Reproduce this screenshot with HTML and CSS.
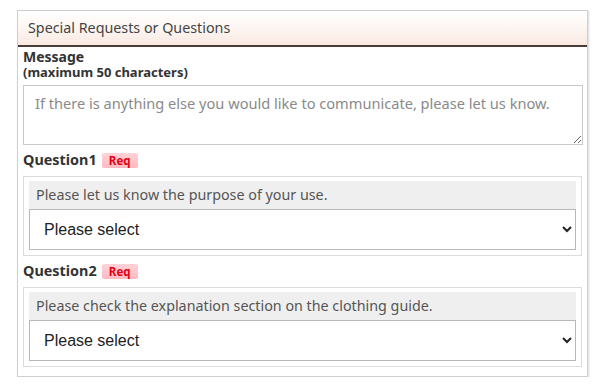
FILE: index.html
```html
<!DOCTYPE html>
<html lang="en">
<head>
    <meta charset="UTF-8">
    <title>Special Requests or Questions</title>
    <link rel="stylesheet" href="styles.css">
</head>
<body>
    <div class="panel">
        <div class="panel-head">Special Requests or Questions</div>
        <div class="panel-body">
            <div class="field-title">Message</div>
            <div class="field-note">(maximum 50 characters)</div>
            <textarea class="message" placeholder="If there is anything else you would like to communicate, please let us know."></textarea>

            <div class="q-title">Question1 <span class="req">Req</span></div>
            <div class="q-box">
                <div class="q-text">Please let us know the purpose of your use.</div>
                <select class="q-select">
                    <option>Please select</option>
                </select>
            </div>

            <div class="q-title">Question2 <span class="req">Req</span></div>
            <div class="q-box">
                <div class="q-text">Please check the explanation section on the clothing guide.</div>
                <select class="q-select">
                    <option>Please select</option>
                </select>
            </div>
        </div>
    </div>
</body>
</html>
```

FILE: styles.css
```css
* {
    margin: 0;
    padding: 0;
    box-sizing: border-box;
}

body {
    font-family: "Noto Sans", "Open Sans", sans-serif;
    color: #333;
    background: #fff;
    padding: 10px 0 0 17px;
}

.panel {
    width: 571px;
    border: 1px solid #cfcfcf;
    box-shadow: 1px 1px 2px rgba(0, 0, 0, 0.15);
}

.panel-head {
    height: 36px;
    line-height: 34px;
    padding-left: 10px;
    font-size: 14.3px;
    color: #444;
    background: linear-gradient(to bottom, #fff 0%, #fdf6f2 50%, #f9e9e2 100%);
    border-bottom: 2px solid #4a3b35;
}

.panel-body {
    padding: 1px 4px 9px 5px;
}

.field-title {
    font-size: 14px;
    font-weight: bold;
    line-height: 17px;
}

.field-note {
    font-size: 13px;
    font-weight: bold;
    line-height: 15px;
}

.message {
    display: block;
    width: 560px;
    height: 60px;
    margin-top: 5px;
    padding: 7px 11px;
    border: 1px solid #c8c8c8;
    font-family: inherit;
    font-size: 14.6px;
    line-height: 20px;
    resize: vertical;
}

.message::placeholder {
    color: #8a8a8a;
}

.q-title {
    font-size: 14.4px;
    font-weight: bold;
    line-height: 16px;
    margin: 7px 0 8px;
    display: flex;
    align-items: center;
    gap: 5px;
}

.req {
    display: inline-block;
    width: 36px;
    text-align: center;
    background: linear-gradient(to bottom, #ffd3d8 0%, #ffb9c1 100%);
    color: #e60012;
    font-size: 11.5px;
    font-weight: bold;
    line-height: 15px;
    border-radius: 2px;
}

.q-box {
    width: 559px;
    border: 1px solid #dcdcdc;
    padding: 4px 5px 5px;
}

.q-text {
    background: #efefef;
    font-size: 14.3px;
    color: #555;
    line-height: 28px;
    padding-left: 7px;
}

.q-select {
    display: block;
    width: 547px;
    height: 41px;
    padding: 0 10px;
    border: 1px solid #b8b8b8;
    border-radius: 0;
    background: #fff;
    font-family: "Liberation Sans", Arial, sans-serif;
    font-size: 16px;
    color: #222;
}
```
